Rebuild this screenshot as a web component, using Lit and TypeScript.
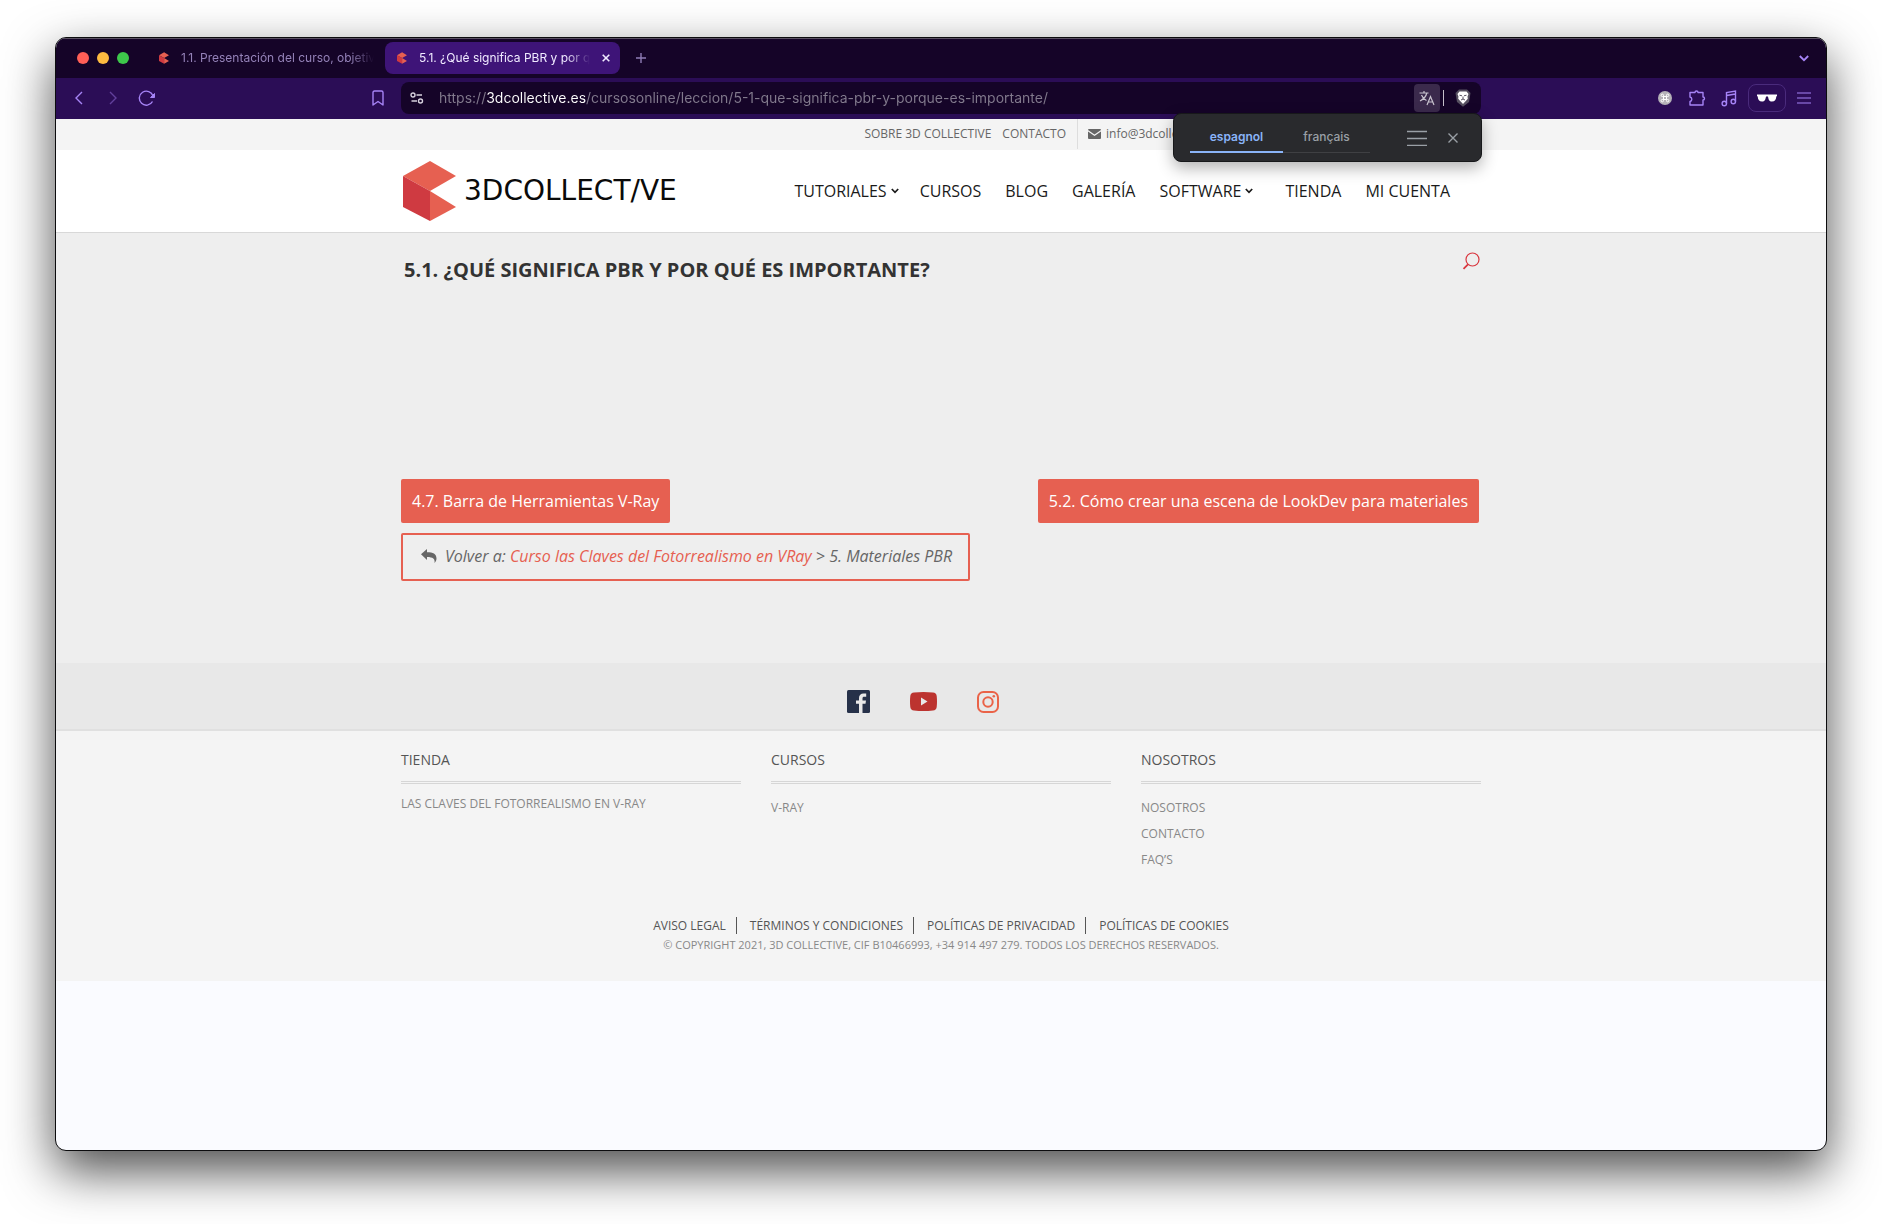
import { LitElement, html, css, svg } from "lit";
import { customElement } from "lit/decorators.js";

const cube = svg`
  <path fill="#e66051" d="M0 15 27 0 53 15 27 30Z"/>
  <path fill="#cf3a41" d="M0 15 27 30V60L0 46Z"/>
  <path fill="#e66051" d="M27 30 53 46 27 60Z"/>`;

const cubeIcon = (cls: string) =>
  html`<svg class=${cls} viewBox="0 0 53 60" aria-hidden="true">${cube}</svg>`;

/* ---------- browser chrome: tabs, toolbar, translate popup ---------- */

@customElement("browser-chrome")
export class BrowserChrome extends LitElement {
  static styles = css`
    :host {
      display: block;
      font-family: Inter, "Liberation Sans", sans-serif;
    }
    button {
      display: flex;
      align-items: center;
      justify-content: center;
      flex: none;
      margin: 0;
      padding: 0;
      border: 0;
      background: none;
      color: #a684f6;
      font: inherit;
    }
    svg {
      display: block;
      fill: none;
      stroke: currentColor;
      stroke-width: 1.4;
      flex: none;
    }
    .tabs {
      display: flex;
      align-items: center;
      box-sizing: border-box;
      height: 40px;
      padding: 0 12px 1px 21px;
      border-top: 1px solid #5a5162;
      background: #150428;
      font-size: 12px;
    }
    .lights {
      display: flex;
      gap: 8px;
      margin-right: 18px;
    }
    .light {
      width: 12px;
      height: 12px;
      border-radius: 50%;
      background: #ff5f57;
    }
    .light.amber {
      background: #febb40;
    }
    .light.green {
      background: #3ec84b;
    }
    .tab {
      display: flex;
      align-items: center;
      box-sizing: border-box;
      width: 235px;
      height: 32px;
      padding: 0 8px 0 12px;
      border-radius: 8px;
      color: #9482b8;
    }
    .tab.active {
      margin-left: 3px;
      background: #3e1478;
      color: #f0eaff;
    }
    .fav {
      width: 10px;
      height: 12px;
      margin-right: 12px;
      stroke: none;
    }
    .label {
      flex: 1;
      min-width: 0;
      overflow: hidden;
      white-space: nowrap;
      color: inherit;
      text-decoration: none;
      line-height: 20px;
      mask-image: linear-gradient(90deg, #000 calc(100% - 24px), transparent);
    }
    .close {
      width: 12px;
      height: 20px;
      margin-left: 10px;
      color: #f0eaff;
    }
    .plus {
      width: 22px;
      height: 32px;
      margin-left: 10px;
      color: #8f7cb6;
    }
    .chev {
      width: 20px;
      height: 32px;
      margin-left: auto;
    }
    .bar {
      display: grid;
      grid-template-columns: 1fr minmax(0, 1080px) 1fr;
      align-items: center;
      box-sizing: border-box;
      height: 41px;
      padding-bottom: 1px;
      background: #2b0d56;
    }
    .left,
    .right {
      display: flex;
      align-items: center;
    }
    .left {
      padding: 0 13px;
      gap: 14px;
    }
    .left button,
    .right button {
      width: 20px;
      height: 28px;
    }
    .left .dim {
      color: #62409c;
    }
    .mark {
      margin-left: auto;
    }
    .right {
      justify-content: flex-end;
      gap: 12px;
      padding-right: 12px;
    }
    .right .shades {
      width: 38px;
      box-sizing: border-box;
      border: 1px solid #4a2b7c;
      border-radius: 8px;
      margin: 0 -4px 0 -3px;
    }
    .address {
      position: relative;
      display: flex;
      align-items: center;
      height: 32px;
      padding-right: 8px;
      border-radius: 8px;
      background: #150428;
    }
    .address .site {
      width: 32px;
      height: 28px;
      color: #d6d1dd;
    }
    .url {
      flex: 1;
      min-width: 0;
      height: 24px;
      margin-left: 6px;
      padding: 0;
      border: 0;
      outline: 0;
      font: 14px/24px Inter, "Liberation Sans", sans-serif;
      color: transparent;
      background: linear-gradient(
        90deg,
        #827a8d 48px,
        #ffffff 48px,
        #ffffff 147px,
        #827a8d 147px
      );
      background-clip: text;
      -webkit-background-clip: text;
    }
    .address .translate {
      width: 26px;
      height: 28px;
      border-radius: 4px;
      background: #3b2a4c;
      color: #c9c4cf;
    }
    .sep {
      width: 1px;
      height: 16px;
      margin: 0 9px 0 3px;
      background: #c4bfca;
    }
    .address .lion {
      width: 20px;
      height: 28px;
    }
    .popup {
      position: absolute;
      top: 31px;
      right: -1px;
      z-index: 2;
      display: flex;
      align-items: center;
      box-sizing: border-box;
      width: 309px;
      height: 49px;
      padding: 0 18px 0 16px;
      border: 1px solid #17181a;
      border-radius: 8px;
      background: #292a2d;
      box-shadow: 0 6px 16px rgba(0, 0, 0, 0.3);
      font-size: 12px;
      font-weight: 500;
    }
    .popup .lang {
      align-self: flex-end;
      box-sizing: border-box;
      width: 87px;
      height: 31px;
      margin-bottom: 8px;
      padding-bottom: 1px;
      border-bottom: 1px solid #3f4043;
      color: #9aa0a6;
    }
    .popup .lang.on {
      width: 93px;
      padding-bottom: 0;
      border-bottom: 2px solid #8ab4f8;
      color: #8ab4f8;
      font-weight: 600;
    }
    .popup .opts {
      width: 20px;
      height: 30px;
      margin-left: auto;
      color: #9aa0a6;
    }
    .popup .x {
      width: 20px;
      height: 30px;
      margin-left: 16px;
      color: #9aa0a6;
    }
  `;

  render() {
    return html`
      <div class="tabs">
        <div class="lights">
          <span class="light"></span><span class="light amber"></span
          ><span class="light green"></span>
        </div>
        <div class="tab">
          ${cubeIcon("fav")}
          <a class="label" href="#">1.1. Presentación del curso, objetivos</a>
        </div>
        <div class="tab active">
          ${cubeIcon("fav")}
          <a class="label" href="#">5.1. ¿Qué significa PBR y por qué es</a>
          <button class="close" aria-label="Cerrar pestaña">
            <svg width="8" height="8" viewBox="0 0 8 8">
              <path d="M.7.7l6.600 6.600M7.300.7.7 7.300" stroke-width="1.6" />
            </svg>
          </button>
        </div>
        <button class="plus" aria-label="Nueva pestaña">
          <svg width="10" height="10" viewBox="0 0 10 10">
            <path d="M5 0v10M0 5h10" />
          </svg>
        </button>
        <button class="chev" aria-label="Buscar pestañas">
          <svg width="10" height="7" viewBox="0 0 10 7">
            <path d="M.8 1 5 5.200 9.200 1" stroke-width="1.8" />
          </svg>
        </button>
      </div>
      <div class="bar">
        <div class="left">
          <button aria-label="Atrás">
            <svg width="8" height="14" viewBox="0 0 8 14"><path d="M7 1 1 7l6 6" /></svg>
          </button>
          <button class="dim" aria-label="Adelante">
            <svg width="8" height="14" viewBox="0 0 8 14"><path d="M1 1l6 6-6 6" /></svg>
          </button>
          <button aria-label="Recargar">
            <svg width="18" height="16" viewBox="0 0 18 16">
              <path d="M14.5 11.5A7 7 0 1 1 15 6" />
              <path d="M16.5 3.5v4h-4z" fill="currentColor" stroke-width="1" />
            </svg>
          </button>
          <button class="mark" aria-label="Marcador">
            <svg width="12" height="16" viewBox="0 0 12 16">
              <path d="M1 15V2.500Q1 1 2.500 1h7Q11 1 11 2.500V15L6 11.500Z" stroke-linejoin="round" />
            </svg>
          </button>
        </div>
        <div class="address">
          <button class="site" aria-label="Información del sitio">
            <svg width="14" height="12" viewBox="0 0 14 12">
              <circle cx="3" cy="3" r="2" /><path d="M6.500 3H12M1.500 9H7" />
              <circle cx="10.500" cy="9" r="2" />
            </svg>
          </button>
          <input
            class="url"
            type="text"
            aria-label="Dirección"
            spellcheck="false"
            value="https://3dcollective.es/cursosonline/leccion/5-1-que-significa-pbr-y-porque-es-importante/"
          />
          <button class="translate" aria-label="Traducir">
            <svg width="16" height="16" viewBox="0 0 16 16">
              <path d="M.5 3h9M5 1v2M2.500 5c1 2.500 3 4.500 5 5.500M7.800 3C7 6.500 4 9.500 1 11" stroke-width="1.200" />
              <path d="M8 15l3.500-8.500L15 15M9.200 12h4.600" stroke-width="1.200" />
            </svg>
          </button>
          <span class="sep"></span>
          <button class="lion" aria-label="Escudos">
            <svg width="16" height="18" viewBox="0 0 16 18">
              <g stroke="none">
                <path d="M4 .5h8L15.500 4l-1.500 9L8 17.800 2 13 .5 4Z" fill="#565060" />
                <path d="M4.500 2.500h7L13.500 5l-1 2.500.3 2.300-2 2.200L8 15l-2.800-3-2-2.200.3-2.300L2.500 5Z" fill="#fff" />
              </g>
              <path d="M4.500 6.200l2.500.6M11.500 6.200l-2.500.6M8 7.500v2.500M6 11l2-1 2 1" stroke="#565060" stroke-width="1" />
            </svg>
          </button>
          <div class="popup">
            <button class="lang on">espagnol</button>
            <button class="lang">français</button>
            <button class="opts" aria-label="Opciones de traducción">
              <svg width="20" height="16" viewBox="0 0 20 16">
                <path d="M0 1.500h20M0 8.500h20M0 15.500h20" />
              </svg>
            </button>
            <button class="x" aria-label="Cerrar">
              <svg width="10" height="10" viewBox="0 0 10 10">
                <path d="M.5.5l9 9M9.500.5l-9 9" />
              </svg>
            </button>
          </div>
        </div>
        <div class="right">
          <button aria-label="Atajos">
            <svg width="14" height="14" viewBox="0 0 14 14">
              <circle cx="7" cy="7" r="7" fill="#b5b2b8" stroke="none" />
              <path
                stroke="#fff"
                stroke-width="1"
                d="M5.500 5.500h3v3h-3zM5.500 5.500H4.300a1.200 1.200 0 1 1 1.200-1.200zM8.500 5.500V4.300a1.200 1.200 0 1 1 1.200 1.200zM8.500 8.500h1.200a1.200 1.200 0 1 1-1.200 1.200zM5.500 8.500v1.200a1.200 1.200 0 1 1-1.200-1.200z"
              />
            </svg>
          </button>
          <button aria-label="Extensiones">
            <svg width="18" height="18" viewBox="0 0 18 18">
              <path
                stroke-linejoin="round"
                d="M2 3.500h5a1.500 1.500 0 0 1 3 0H15V8a1.500 1.500 0 0 1 0 3v5H2v-3.500a2.300 2.300 0 0 0 0-4.500z"
              />
            </svg>
          </button>
          <button aria-label="Música">
            <svg width="18" height="18" viewBox="0 0 18 18">
              <path d="M6.500 14.500V3.500L15.500 2v10.500M6.500 6.500l9-1.500" />
              <circle cx="4.300" cy="14.500" r="2.200" /><circle cx="13.300" cy="12.500" r="2.200" />
            </svg>
          </button>
          <button class="shades" aria-label="Ventana privada">
            <svg width="20" height="8" viewBox="0 0 20 8">
              <path
                fill="#fff"
                stroke="none"
                d="M0 .5h20v1.500l-.7.500C19 6 17.800 7.500 15 7.500S11.500 5.500 11 2.500H9C8.500 5.500 7.800 7.500 5 7.500S1 6 .7 2.500L0 2Z"
              />
            </svg>
          </button>
          <button aria-label="Menú">
            <svg width="14" height="12" viewBox="0 0 14 12">
              <path d="M0 1h14M0 6h14M0 11h14" stroke-width="1.200" />
            </svg>
          </button>
        </div>
      </div>
    `;
  }
}

/* ---------- site header ---------- */

interface NavItem {
  label: string;
  menu?: boolean;
}

const NAV: NavItem[] = [
  { label: "TUTORIALES", menu: true },
  { label: "CURSOS" },
  { label: "BLOG" },
  { label: "GALERÍA" },
  { label: "SOFTWARE", menu: true },
  { label: "TIENDA" },
  { label: "MI CUENTA" },
];

@customElement("site-header")
export class SiteHeader extends LitElement {
  static styles = css`
    :host {
      display: block;
      font-family: "Open Sans", "Noto Sans", sans-serif;
    }
    a {
      color: inherit;
      text-decoration: none;
    }
    .top {
      background: #f4f4f4;
      color: #666;
      font-size: 12px;
      line-height: 30px;
    }
    .inner {
      display: flex;
      max-width: 1080px;
      margin: 0 auto;
    }
    .top .inner {
      height: 31px;
    }
    .links {
      display: flex;
      gap: 11px;
      margin-left: auto;
      padding-right: 11px;
      height: 30px;
      border-right: 1px solid #ddd;
    }
    .mail {
      display: flex;
      align-items: center;
      gap: 5px;
      width: 393px;
      height: 30px;
      padding-left: 10px;
    }
    .head {
      border-bottom: 1px solid #d8d8d8;
      background: #fff;
    }
    .head .inner {
      align-items: center;
      height: 82px;
    }
    .logo {
      display: flex;
      align-items: center;
      gap: 8px;
      margin-left: 2px;
      color: #0a0a0a;
      font: 28px/32px "DejaVu Sans", sans-serif;
    }
    .cube {
      width: 53px;
      height: 60px;
    }
    nav {
      display: flex;
      gap: 24px;
      margin-left: auto;
      margin-right: 31px;
      color: #1a1a1a;
      font-size: 16px;
      line-height: 24px;
    }
    .item {
      display: flex;
      align-items: center;
      gap: 4px;
    }
    .item.menu {
      margin-right: 8px;
    }
    .item.menu:first-child {
      margin-right: -3px;
    }
  `;

  render() {
    return html`
      <div class="top">
        <div class="inner">
          <div class="links"><a href="#">SOBRE 3D COLLECTIVE</a><a href="#">CONTACTO</a></div>
          <a class="mail" href="mailto:info@3dcollective.es">
            <svg width="13" height="10" viewBox="0 0 13 10" fill="#666" aria-hidden="true">
              <path d="M1 0h11q1 0 1 1L6.500 5.500 0 1Q0 0 1 0Z" />
              <path d="M0 2.500l6.500 4.500L13 2.500V9q0 1-1 1H1Q0 10 0 9Z" />
            </svg>
            info@3dcollective.es
          </a>
        </div>
      </div>
      <div class="head">
        <div class="inner">
          <a class="logo" href="#">${cubeIcon("cube")}<span>3DCOLLECT/VE</span></a>
          <nav>
            ${NAV.map(
              (n) => html`<a class="item ${n.menu ? "menu" : ""}" href="#"
                >${n.label}${n.menu
                  ? html`<svg width="8" height="6" viewBox="0 0 8 6" fill="none" stroke="#1a1a1a" stroke-width="1.7">
                      <path d="M.8 1 4 4.300 7.200 1" />
                    </svg>`
                  : ""}</a
              >`
            )}
          </nav>
        </div>
      </div>
    `;
  }
}

/* ---------- lesson ---------- */

@customElement("lesson-view")
export class LessonView extends LitElement {
  static styles = css`
    :host {
      display: block;
      background: #eee;
      color: #666;
      font: 16px/24px "Open Sans", "Noto Sans", sans-serif;
    }
    a {
      text-decoration: none;
    }
    .inner {
      max-width: 1080px;
      margin: 0 auto;
      padding: 19px 0 82px;
    }
    .title {
      display: flex;
      align-items: flex-start;
      justify-content: space-between;
      min-height: 227px;
    }
    h1 {
      margin: 4px 0 0 3px;
      color: #333;
      font-size: 20px;
      line-height: 28px;
      font-weight: 700;
    }
    .search {
      margin: 0 1px 0 0;
      padding: 0;
      border: 0;
      background: none;
    }
    .search svg {
      display: block;
    }
    .steps {
      display: flex;
      justify-content: space-between;
      padding-right: 2px;
    }
    .step {
      padding: 10px 11px;
      border-radius: 2px;
      background: #e66051;
      color: #fff;
    }
    .back {
      display: inline-flex;
      align-items: center;
      gap: 8px;
      margin-top: 10px;
      padding: 10px 16px 12px 18px;
      border: 2px solid #e66051;
      border-radius: 2px;
      line-height: 22px;
      font-style: italic;
    }
    .back a {
      color: #e66051;
    }
  `;

  render() {
    return html`
      <div class="inner">
        <div class="title">
          <h1>5.1. ¿QUÉ SIGNIFICA PBR Y POR QUÉ ES IMPORTANTE?</h1>
          <button class="search" aria-label="Buscar">
            <svg width="18" height="18" viewBox="0 0 18 18" fill="none" stroke="#d9363e">
              <circle cx="10.500" cy="7.500" r="6.500" stroke-width="1.200" />
              <path d="M6 12.300 1.500 16.800" stroke-width="1.800" />
            </svg>
          </button>
        </div>
        <div class="steps">
          <a class="step" href="#">4.7. Barra de Herramientas V-Ray</a>
          <a class="step" href="#">5.2. Cómo crear una escena de LookDev para materiales</a>
        </div>
        <div class="back">
          <svg width="16" height="14" viewBox="0 0 16 14" fill="#666" aria-hidden="true">
            <path d="M0 5.200 6 0v3.200c6 0 9.500 1.500 9.500 6.300 0 1.800-.8 3.300-2 4.500.8-4-1.500-6-7.500-6v3Z" />
          </svg>
          <span
            >Volver a: <a href="#">Curso las Claves del Fotorrealismo en VRay</a> &gt; 5. Materiales
            PBR</span
          >
        </div>
      </div>
    `;
  }
}

/* ---------- footer ---------- */

const LEGAL = [
  "AVISO LEGAL",
  "TÉRMINOS Y CONDICIONES",
  "POLÍTICAS DE PRIVACIDAD",
  "POLÍTICAS DE COOKIES",
];

@customElement("site-footer")
export class SiteFooter extends LitElement {
  static styles = css`
    :host {
      display: block;
      background: #f4f4f4;
      color: #888;
      font: 12px/20px "Open Sans", "Noto Sans", sans-serif;
    }
    a {
      color: inherit;
      text-decoration: none;
    }
    svg {
      display: block;
    }
    .social {
      display: flex;
      justify-content: center;
      align-items: center;
      gap: 40px;
      box-sizing: border-box;
      height: 68px;
      padding: 11px 36px 0 0;
      border-bottom: 2px solid #e0e0e0;
      background: #e8e8e8;
    }
    .cols {
      display: grid;
      grid-template-columns: repeat(3, 1fr);
      gap: 30px;
      max-width: 1080px;
      min-height: 144px;
      margin: 0 auto;
      padding-top: 19px;
    }
    h2 {
      margin: 0 0 10px;
      padding-bottom: 11px;
      border-bottom: 3px double #d6d6d6;
      color: #555;
      font-size: 14px;
      font-weight: 400;
      line-height: 20px;
    }
    .product {
      display: block;
    }
    ul {
      display: grid;
      gap: 6px;
      margin: 0;
      padding: 4px 0 0;
      list-style: none;
    }
    .legal {
      display: flex;
      justify-content: center;
      gap: 13px;
      padding: 23px 0 0;
      color: #555;
      line-height: 17px;
    }
    .legal a:not(:last-child) {
      padding-right: 10px;
      border-right: 1px solid #555;
    }
    .copy {
      margin: 0;
      padding: 1px 0 26px;
      text-align: center;
      font-size: 11px;
    }
  `;

  render() {
    return html`
      <div class="social">
        <a href="#" aria-label="Facebook">
          <svg width="23" height="23" viewBox="0 0 23 23">
            <rect width="23" height="23" rx="1.500" fill="#263149" />
            <path
              fill="#e8e8e8"
              d="M12 23v-9.200H9v-3.300h3V8c0-3 1.800-4.500 4.500-4.500h2.700v3.200h-2c-1.300 0-1.700.6-1.700 1.700v2.100h3.500l-.5 3.300h-3V23Z"
            />
          </svg>
        </a>
        <a href="#" aria-label="YouTube">
          <svg width="27" height="19" viewBox="0 0 27 19">
            <path
              fill="#bc332f"
              d="M4 .5Q13.500-.5 23 .5 26.300.8 26.700 4q.6 5.500 0 11-.4 3.200-3.700 3.500-9.500 1-19 0Q.7 18.200.3 15q-.6-5.500 0-11Q.7.800 4 .5Z"
            />
            <path fill="#e8e8e8" d="M11 5.500v8l6.500-4Z" />
          </svg>
        </a>
        <a href="#" aria-label="Instagram">
          <svg width="22" height="22" viewBox="0 0 22 22" fill="none" stroke="#ea6348" stroke-width="2">
            <rect x="1" y="1" width="20" height="20" rx="5.500" />
            <circle cx="11" cy="11" r="4.700" />
            <circle cx="16.800" cy="5.200" r="1.300" fill="#ea6348" stroke="none" />
          </svg>
        </a>
      </div>
      <div class="cols">
        <section>
          <h2>TIENDA</h2>
          <a class="product" href="#">LAS CLAVES DEL FOTORREALISMO EN V-RAY</a>
        </section>
        <section>
          <h2>CURSOS</h2>
          <ul>
            <li><a href="#">V-RAY</a></li>
          </ul>
        </section>
        <section>
          <h2>NOSOTROS</h2>
          <ul>
            <li><a href="#">NOSOTROS</a></li>
            <li><a href="#">CONTACTO</a></li>
            <li><a href="#">FAQ’S</a></li>
          </ul>
        </section>
      </div>
      <div class="legal">${LEGAL.map((t) => html`<a href="#">${t}</a>`)}</div>
      <p class="copy">
        © COPYRIGHT 2021, 3D COLLECTIVE, CIF B10466993, +34 914 497 279. TODOS LOS DERECHOS
        RESERVADOS.
      </p>
    `;
  }
}

/* ---------- desktop and window ---------- */

@customElement("app-root")
export class AppRoot extends LitElement {
  static styles = css`
    :host {
      display: flex;
      box-sizing: border-box;
      min-height: 100vh;
      padding: 37px 55px 73px;
      background: #fff;
      overflow: hidden;
    }
    .window {
      flex: 1;
      min-width: 0;
      border: 1px solid #0c0c0e;
      border-radius: 11px;
      overflow: hidden;
      background: #fafbff;
      box-shadow: 0 20px 50px rgba(0, 0, 0, 0.7);
    }
  `;

  render() {
    return html`
      <div class="window">
        <browser-chrome></browser-chrome>
        <site-header></site-header>
        <lesson-view></lesson-view>
        <site-footer></site-footer>
      </div>
    `;
  }
}
